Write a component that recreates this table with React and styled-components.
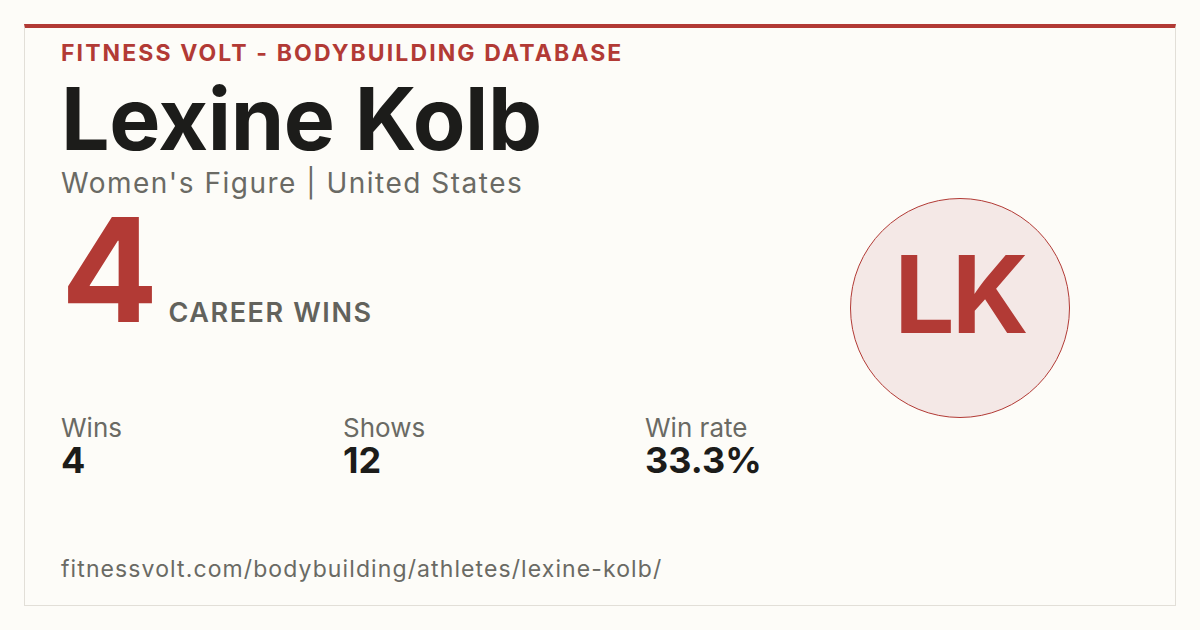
import React from 'react';
import styled, { createGlobalStyle } from 'styled-components';

const GlobalStyle = createGlobalStyle`
  html, body {
    margin: 0;
    padding: 0;
    background: #fdfcf8;
  }
  body {
    font-family: 'Inter', 'Liberation Sans', sans-serif;
  }
`;

const Page = styled.div`
  width: 1200px;
  height: 630px;
  padding: 24px;
  box-sizing: border-box;
`;

const Card = styled.div`
  height: 582px;
  box-sizing: border-box;
  background: #fdfcf8;
  border: 1px solid #e2dfd8;
  border-top: 4px solid #b23a35;
  padding: 14px 36px 24px 36px;
  display: flex;
  flex-direction: column;
`;

const Eyebrow = styled.div`
  font-size: 23px;
  line-height: 1;
  font-weight: 700;
  letter-spacing: 2.1px;
  color: #b23a35;
  text-transform: uppercase;
`;

const Main = styled.div`
  flex: 1;
  display: flex;
  align-items: stretch;
`;

const Left = styled.div`
  flex: 1;
  display: flex;
  flex-direction: column;
`;

const Name = styled.h1`
  margin: 11px 0 0 0;
  font-size: 86px;
  line-height: 1;
  font-weight: 700;
  letter-spacing: -0.4px;
  color: #1c1c1a;
`;

const Subtitle = styled.div`
  margin-top: 7px;
  font-size: 28px;
  line-height: 1;
  font-weight: 400;
  letter-spacing: 1.5px;
  color: #6a6a64;
`;

const WinsRow = styled.div`
  margin-top: 1px;
  display: flex;
  align-items: baseline;
  gap: 12px;
`;

const BigNumber = styled.div`
  font-size: 144px;
  line-height: 1;
  font-weight: 700;
  color: #b23a35;
  letter-spacing: -2px;
`;

const WinsLabel = styled.div`
  font-size: 27px;
  font-weight: 600;
  letter-spacing: 1.6px;
  color: #62625c;
  text-transform: uppercase;
`;

const Stats = styled.div`
  margin-top: 73px;
  display: grid;
  grid-template-columns: 282px 302px auto;
`;

const Stat = styled.div`
  display: flex;
  flex-direction: column;
`;

const StatLabel = styled.div`
  font-size: 26px;
  line-height: 1;
  color: #6a6a64;
`;

const StatValue = styled.div`
  margin-top: 1px;
  font-size: 36px;
  line-height: 1;
  font-weight: 700;
  color: #1c1c1a;
`;

const Right = styled.div`
  display: flex;
  align-items: center;
  padding-right: 69px;
`;

const Avatar = styled.div`
  width: 220px;
  height: 220px;
  margin-top: -8px;
  padding-bottom: 26px;
  border-radius: 50%;
  box-sizing: border-box;
  border: 1.5px solid #b23a35;
  background: #f4e8e6;
  color: #b23a35;
  display: flex;
  align-items: center;
  justify-content: center;
  font-size: 107px;
  line-height: 1;
  font-weight: 700;
  letter-spacing: -3px;
`;

const Url = styled.div`
  font-size: 23px;
  line-height: 1;
  letter-spacing: 1.1px;
  color: #6a6a64;
`;

const stats = [
  { label: 'Wins', value: '4' },
  { label: 'Shows', value: '12' },
  { label: 'Win rate', value: '33.3%' },
];

export default function App() {
  return (
    <>
      <GlobalStyle />
      <Page>
        <Card>
          <Eyebrow>Fitness Volt - Bodybuilding Database</Eyebrow>
          <Main>
            <Left>
              <Name>Lexine Kolb</Name>
              <Subtitle>Women's Figure | United States</Subtitle>
              <WinsRow>
                <BigNumber>4</BigNumber>
                <WinsLabel>Career Wins</WinsLabel>
              </WinsRow>
              <Stats>
                {stats.map((s) => (
                  <Stat key={s.label}>
                    <StatLabel>{s.label}</StatLabel>
                    <StatValue>{s.value}</StatValue>
                  </Stat>
                ))}
              </Stats>
            </Left>
            <Right>
              <Avatar>LK</Avatar>
            </Right>
          </Main>
          <Url>fitnessvolt.com/bodybuilding/athletes/lexine-kolb/</Url>
        </Card>
      </Page>
    </>
  );
}
